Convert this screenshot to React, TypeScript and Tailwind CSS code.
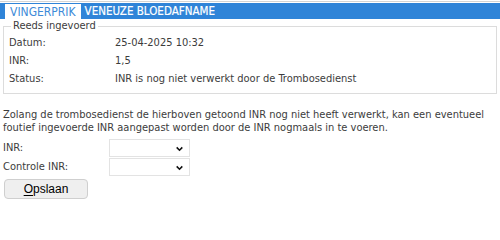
import React from "react"

const font = "font-['DejaVu_Sans_Condensed','DejaVu_Sans',sans-serif] [font-stretch:condensed]"

function Row({ label, value }: { label: string; value: string }) {
  return (
    <div className="flex h-[18px] items-center">
      <span className="w-[106px] shrink-0">{label}</span>
      <span>{value}</span>
    </div>
  )
}

function Select() {
  return (
    <div className="relative h-[18px] w-[81px] border border-[#e3e3e3] bg-white">
      <svg viewBox="0 0 10 10" className="absolute right-[5px] top-[5px] h-[8px] w-[9px]">
        <path d="M1.5 3 L5 6.5 L8.5 3" fill="none" stroke="#111" strokeWidth="2" />
      </svg>
    </div>
  )
}

export default function App() {
  return (
    <div className={`${font} min-h-[206px] bg-white pt-px text-[11px] text-[#3c3c3c]`}>
      <div className="border-t border-[#d4d4d4] pt-[1px]">
        <div className="flex h-[16px] items-end bg-[#2f84d8] pl-[5px]">
          <div className="flex h-[15px] items-center bg-white px-[5px] text-[12px] text-[#3d8ad8]">VINGERPRIK</div>
          <div className="flex h-[15px] items-center px-[4px] text-[11.5px] text-white [-webkit-text-stroke:0.2px_white]">VENEUZE BLOEDAFNAME</div>
        </div>
      </div>

      <fieldset className="mx-[3px] mt-px border border-[#dcdcdc] pb-[5px] pl-[5px] pr-2">
        <legend className="ml-[2px] px-[2px] leading-[12px]">Reeds ingevoerd</legend>
        <div className="pt-[2px]">
          <Row label="Datum:" value="25-04-2025 10:32" />
          <Row label="INR:" value="1,5" />
          <Row label="Status:" value="INR is nog niet verwerkt door de Trombosedienst" />
        </div>
      </fieldset>

      <p className="mt-[14px] px-[3px] leading-[13px]">
        Zolang de trombosedienst de hierboven getoond INR nog niet heeft verwerkt, kan een eventueel foutief ingevoerde INR aangepast worden door de INR nogmaals in te voeren.
      </p>

      <div className="mt-[5px] flex flex-col gap-[1px] px-[3px]">
        <div className="flex items-center">
          <span className="w-[106px]">INR:</span>
          <Select />
        </div>
        <div className="flex items-center">
          <span className="w-[106px]">Controle INR:</span>
          <Select />
        </div>
      </div>

      <button className="ml-[4px] mt-[3px] h-[20px] w-[84px] rounded-[4px] border border-[#cfcfcf] bg-[#efefef] font-['Liberation_Sans',Arial,sans-serif] text-[12px] text-black">
        <span className="underline underline-offset-2">O</span>pslaan
      </button>
    </div>
  )
}
